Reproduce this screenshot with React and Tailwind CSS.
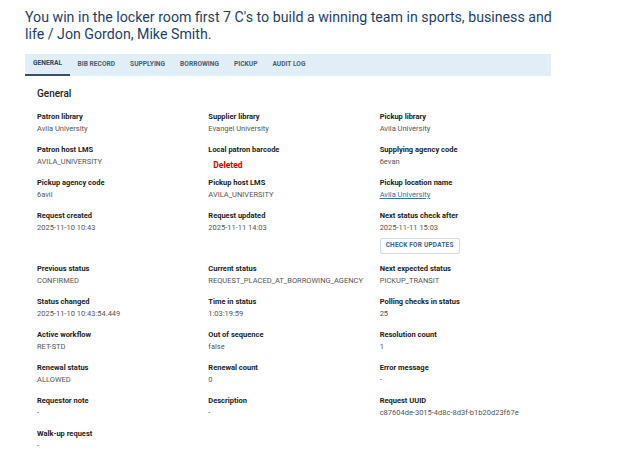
const tabs = ["General", "Bib record", "Supplying", "Borrowing", "Pickup", "Audit log"];

const fields = [
  { label: "Patron library", value: "Avila University" },
  { label: "Supplier library", value: "Evangel University" },
  { label: "Pickup library", value: "Avila University" },
  { label: "Patron host LMS", value: "AVILA_UNIVERSITY" },
  { label: "Local patron barcode", value: "Deleted", kind: "deleted" },
  { label: "Supplying agency code", value: "6evan" },
  { label: "Pickup agency code", value: "6avil" },
  { label: "Pickup host LMS", value: "AVILA_UNIVERSITY" },
  { label: "Pickup location name", value: "Avila University", kind: "link" },
  { label: "Request created", value: "2025-11-10 10:43" },
  { label: "Request updated", value: "2025-11-11 14:03" },
  { label: "Next status check after", value: "2025-11-11 15:03", kind: "button" },
  { label: "Previous status", value: "CONFIRMED" },
  { label: "Current status", value: "REQUEST_PLACED_AT_BORROWING_AGENCY" },
  { label: "Next expected status", value: "PICKUP_TRANSIT" },
  { label: "Status changed", value: "2025-11-10 10:43:54.449" },
  { label: "Time in status", value: "1:03:19:59" },
  { label: "Polling checks in status", value: "25" },
  { label: "Active workflow", value: "RET-STD" },
  { label: "Out of sequence", value: "false" },
  { label: "Resolution count", value: "1" },
  { label: "Renewal status", value: "ALLOWED" },
  { label: "Renewal count", value: "0" },
  { label: "Error message", value: "-" },
  { label: "Requestor note", value: "-" },
  { label: "Description", value: "-" },
  { label: "Request UUID", value: "c87604de-3015-4d8c-8d3f-b1b20d23f67e" },
  { label: "Walk-up request", value: "-" },
];

function Field({ label, value, kind }) {
  return (
    <div className="flex flex-col">
      <div className="text-[7.5px] leading-[12px] font-bold text-[#222]">{label}</div>
      {kind === "deleted" ? (
        <div className="text-[8.5px] leading-[12px] font-bold text-[#e00000] pl-[5px] mt-[3px] -mb-[3px]">
          {value}
        </div>
      ) : kind === "link" ? (
        <a className="text-[7.5px] leading-[12px] text-[#3d6e9e] underline">{value}</a>
      ) : (
        <div className="text-[7.5px] leading-[12px] text-[#555]">{value}</div>
      )}
      {kind === "button" && (
        <button className="mt-[4px] self-start h-[16px] w-[80px] border border-[#d3dbe3] rounded-[2px] text-[6.5px] font-bold tracking-[0.2px] text-[#3a5f86] bg-white">
          CHECK FOR UPDATES
        </button>
      )}
    </div>
  );
}

export default function App() {
  return (
    <div className="bg-white min-h-[459px] font-['Roboto',sans-serif] pl-[25px] pt-[9px]">
      <h1 className="w-[530px] text-[14.2px] leading-[17px] text-[#1d3f66] font-normal">
        You win in the locker room first 7 C's to build a winning team in sports, business and
        life / Jon Gordon, Mike Smith.
      </h1>

      <div className="mt-[11px] w-[526px]">
        <div className="flex h-[22px] bg-[#e2eef7]">
          {tabs.map((t, i) => (
            <div
              key={t}
              className={
                i === 0
                  ? "flex items-center px-[8px] text-[6.65px] font-bold uppercase text-[#2d4660] border-b-2 border-[#35506d]"
                  : "flex items-center px-[7.5px] text-[6.65px] font-bold uppercase text-[#4a5d70]"
              }
            >
              {t}
            </div>
          ))}
        </div>

        <div className="pl-[12px] pt-[12px]">
          <h2 className="text-[10px] leading-[12px] font-medium text-[#222]">General</h2>
          <div className="grid grid-cols-3 w-[514px] gap-y-[9px] mt-[11px]">
            {fields.map((f) => (
              <Field key={f.label} {...f} />
            ))}
          </div>
        </div>
      </div>
    </div>
  );
}
